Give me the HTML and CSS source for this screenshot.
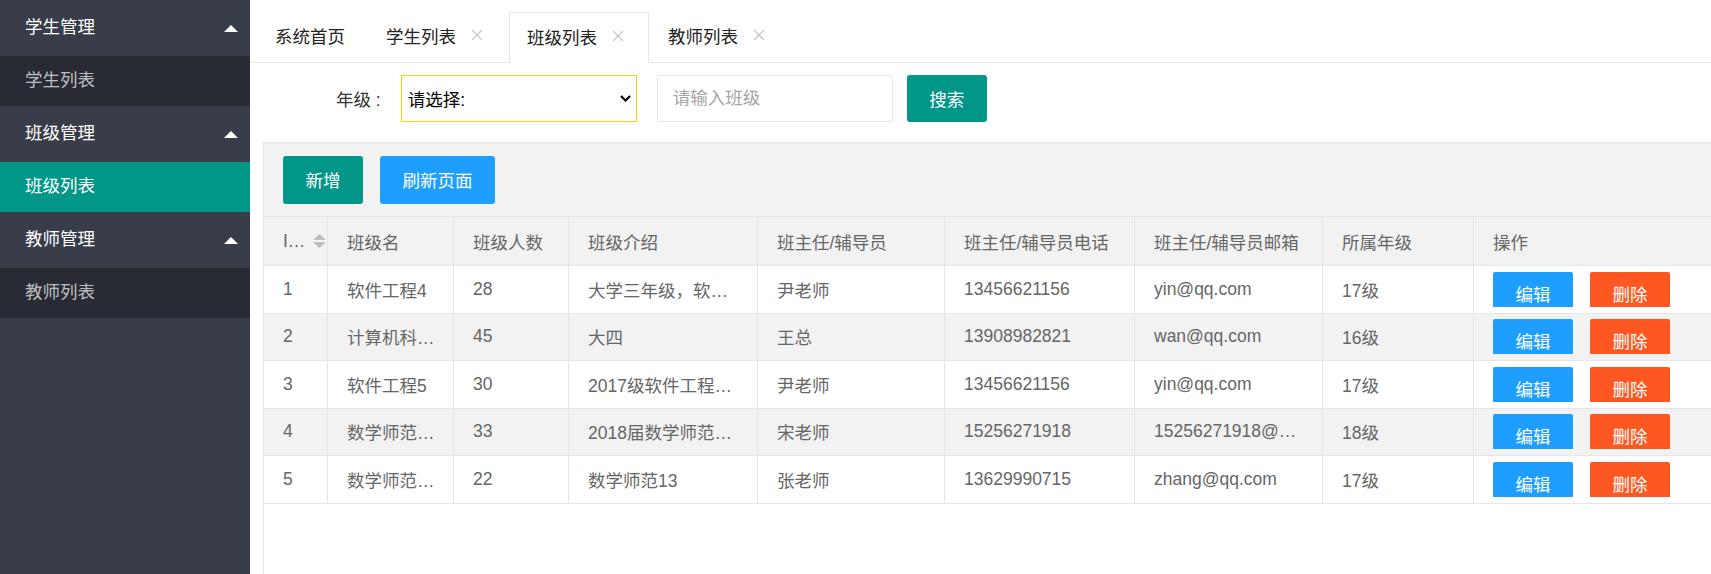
FILE: index.html
```html
<!DOCTYPE html>
<html lang="zh-CN">
<head>
<meta charset="utf-8">
<title>班级列表</title>
<link rel="stylesheet" href="styles.css">
</head>
<body>
<div class="app">
  <aside class="side">
    <div class="nav-head">学生管理<span class="caret"></span></div>
    <div class="nav-item">学生列表</div>
    <div class="nav-head">班级管理<span class="caret"></span></div>
    <div class="nav-item on">班级列表</div>
    <div class="nav-head">教师管理<span class="caret"></span></div>
    <div class="nav-item">教师列表</div>
  </aside>
  <main class="main">
    <div class="tabs">
      <div class="tab">系统首页</div>
      <div class="tab closable">学生列表<span class="close"><svg width="12" height="12" viewBox="0 0 12 12"><path d="M1 1L11 11M11 1L1 11" stroke="#c8c8c8" stroke-width="1.3"/></svg></span></div>
      <div class="tab closable active">班级列表<span class="close"><svg width="12" height="12" viewBox="0 0 12 12"><path d="M1 1L11 11M11 1L1 11" stroke="#c8c8c8" stroke-width="1.3"/></svg></span></div>
      <div class="tab closable">教师列表<span class="close"><svg width="12" height="12" viewBox="0 0 12 12"><path d="M1 1L11 11M11 1L1 11" stroke="#c8c8c8" stroke-width="1.3"/></svg></span></div>
    </div>
    <form class="search">
      <label class="lbl">年级 :</label>
      <div class="select"><span>请选择:</span><svg width="11" height="7" viewBox="0 0 11 7"><path d="M1 1l4.5 4.5L10 1" fill="none" stroke="#000" stroke-width="2.2"/></svg></div>
      <input class="input" type="text" placeholder="请输入班级">
      <button class="btn green search-btn" type="button">搜索</button>
    </form>
    <section class="panel">
      <div class="toolbar">
        <button class="btn green add" type="button">新增</button>
        <button class="btn blue refresh" type="button">刷新页面</button>
      </div>
      <table class="grid">
        <thead>
          <tr>
            <th class="c1"><span class="idh"><span>I…</span><svg width="13" height="14" viewBox="0 0 13 14"><path d="M6.5 0L13 6H0z M0 8h13l-6.5 6z" fill="#bdbdbd"/></svg></span></th>
            <th class="c2">班级名</th>
            <th class="c3">班级人数</th>
            <th class="c4">班级介绍</th>
            <th class="c5">班主任/辅导员</th>
            <th class="c6">班主任/辅导员电话</th>
            <th class="c7">班主任/辅导员邮箱</th>
            <th class="c8">所属年级</th>
            <th class="c9">操作</th>
          </tr>
        </thead>
        <tbody>
          <tr>
            <td>1</td><td>软件工程4</td><td>28</td><td>大学三年级，软件工程专业</td><td>尹老师</td><td>13456621156</td><td>yin@qq.com</td><td>17级</td>
            <td class="ops"><div class="ops-in"><button class="btn blue op" type="button">编辑</button><button class="btn red op" type="button">删除</button></div></td>
          </tr>
          <tr>
            <td>2</td><td>计算机科学与技术</td><td>45</td><td>大四</td><td>王总</td><td>13908982821</td><td>wan@qq.com</td><td>16级</td>
            <td class="ops"><div class="ops-in"><button class="btn blue op" type="button">编辑</button><button class="btn red op" type="button">删除</button></div></td>
          </tr>
          <tr>
            <td>3</td><td>软件工程5</td><td>30</td><td>2017级软件工程专业</td><td>尹老师</td><td>13456621156</td><td>yin@qq.com</td><td>17级</td>
            <td class="ops"><div class="ops-in"><button class="btn blue op" type="button">编辑</button><button class="btn red op" type="button">删除</button></div></td>
          </tr>
          <tr>
            <td>4</td><td>数学师范专业</td><td>33</td><td>2018届数学师范专业</td><td>宋老师</td><td>15256271918</td><td>15256271918@qq.com</td><td>18级</td>
            <td class="ops"><div class="ops-in"><button class="btn blue op" type="button">编辑</button><button class="btn red op" type="button">删除</button></div></td>
          </tr>
          <tr>
            <td>5</td><td>数学师范专业</td><td>22</td><td>数学师范13</td><td>张老师</td><td>13629990715</td><td>zhang@qq.com</td><td>17级</td>
            <td class="ops"><div class="ops-in"><button class="btn blue op" type="button">编辑</button><button class="btn red op" type="button">删除</button></div></td>
          </tr>
        </tbody>
      </table>
    </section>
  </main>
</div>
</body>
</html>
```

FILE: styles.css
```css
html, body {
  margin: 0;
  padding: 0;
}
body {
  font-family: "Liberation Sans", "Noto Sans CJK SC", sans-serif;
  font-size: 17.5px;
  color: #333;
  background: #fff;
}
.app {
  display: flex;
  width: 1711px;
  height: 574px;
  overflow: hidden;
}

/* sidebar */
.side {
  width: 250px;
  flex: none;
  background: #393D49;
}
.nav-head {
  box-sizing: border-box;
  height: 56px;
  display: flex;
  align-items: center;
  justify-content: space-between;
  padding: 0 12px 6px 25px;
  color: #fff;
}
.caret {
  width: 0;
  height: 0;
  margin-top: 6px;
  border-left: 7.5px solid transparent;
  border-right: 7.5px solid transparent;
  border-bottom: 7px solid #fff;
}
.nav-item {
  box-sizing: border-box;
  height: 50px;
  display: flex;
  align-items: center;
  padding: 0 0 5px 25px;
  background: #282B33;
  color: rgba(255, 255, 255, 0.7);
}
.nav-item.on {
  background: #009688;
  color: #fff;
}

/* main */
.main {
  flex: 1;
  min-width: 0;
  display: flex;
  flex-direction: column;
  overflow: hidden;
}
.tabs {
  display: flex;
  gap: 5px;
  padding: 12px 0 0 7px;
  height: 50px;
  border-bottom: 1px solid #e6e6e6;
}
.tab {
  box-sizing: border-box;
  height: 50px;
  padding: 0 18px 4px;
  display: flex;
  align-items: center;
  color: #222;
}
.tab.closable {
  padding-right: 16px;
}
.tab.active {
  height: 51px;
  margin-bottom: -1px;
  margin-right: -4px;
  padding: 0 19px 4px 17px;
  border: 1px solid #e6e6e6;
  border-bottom: none;
  background: #fff;
}
.close {
  width: 22px;
  margin-left: 10px;
  display: flex;
  justify-content: center;
  align-items: center;
}

.search {
  display: flex;
  align-items: center;
  margin: 0;
  padding: 12px 0 0 86px;
  height: 47px;
}
.lbl {
  color: #333;
  margin-right: 20px;
}
.select {
  box-sizing: border-box;
  width: 236px;
  height: 47px;
  border: 1px solid #f8cf0a;
  display: flex;
  align-items: center;
  justify-content: space-between;
  padding: 0 5px 0 6px;
  color: #000;
}
.input {
  box-sizing: border-box;
  width: 236px;
  height: 47px;
  margin-left: 20px;
  border: 1px solid #e6e6e6;
  border-radius: 3px;
  padding: 0 15px;
  font: inherit;
  color: #333;
  outline: none;
}
.input::placeholder {
  color: #a5a5a5;
}
.btn {
  border: none;
  padding: 0;
  font: inherit;
  color: #fff;
  border-radius: 3px;
  text-align: center;
  cursor: pointer;
}
.green { background: #009688; }
.blue { background: #1E9FFF; }
.red { background: #FF5722; }
.search-btn {
  margin-left: 14px;
  width: 80px;
  height: 47px;
}

.panel {
  flex: 1;
  margin: 20px 0 0 13px;
  border-left: 1px solid #e6e6e6;
  border-top: 1px solid #e6e6e6;
  overflow: hidden;
}
.toolbar {
  height: 73px;
  background: #F2F2F2;
  display: flex;
  align-items: center;
  gap: 17px;
  padding-left: 19px;
}
.add { width: 80px; height: 48px; }
.refresh { width: 115px; height: 48px; }

.grid {
  border-collapse: separate;
  border-spacing: 0;
  table-layout: fixed;
  width: 1450px;
}
.grid th, .grid td {
  box-sizing: border-box;
  border-right: 1px solid #e6e6e6;
  border-bottom: 1px solid #e6e6e6;
  padding: 0 17px 0 19px;
  text-align: left;
  font-weight: normal;
  color: #666;
  white-space: nowrap;
  overflow: hidden;
  text-overflow: ellipsis;
}
.grid th {
  height: 50px;
  border-top: 1px solid #e6e6e6;
  background: #F2F2F2;
}
.grid td {
  height: 47.5px;
  background: #fff;
}
.grid tbody tr:nth-child(even) td {
  background: #F2F2F2;
}
.grid th:last-child, .grid td:last-child {
  border-right: none;
}
.c1 { width: 64px; }
.c2 { width: 126px; }
.c3 { width: 115px; }
.c4 { width: 189px; }
.c5 { width: 187px; }
.c6 { width: 190px; }
.c7 { width: 188px; }
.c8 { width: 151px; }
.c9 { width: 240px; }
.idh {
  display: inline-flex;
  align-items: center;
  gap: 8px;
}
.ops-in {
  height: 35px;
  overflow: hidden;
  display: flex;
  align-items: flex-start;
  gap: 17px;
}
.op {
  width: 80px;
  height: 47px;
  line-height: 47px;
  flex: none;
  border-radius: 2px;
}
```
